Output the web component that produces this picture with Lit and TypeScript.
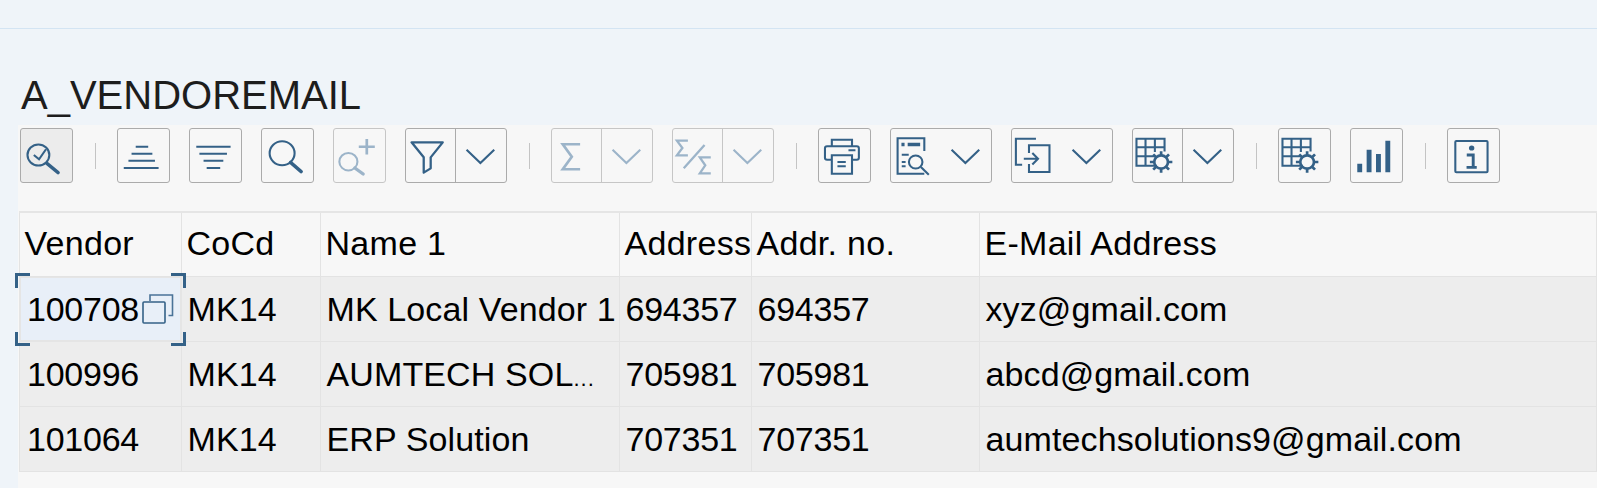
import { LitElement, html, css, svg, nothing } from "lit";
import { customElement } from "lit/decorators.js";

const chevron = (x: number, y = 21.7) => svg`<path d="M${x} ${y} L${x + 13.3} ${y + 13.3} L${x + 26.6} ${y}" fill="none" stroke-width="2"/>`;

const gridGear = svg`
  <path d="M24 37.7H4.3V10.7H31.3V23.5M4.3 19.3H31.3M4.3 28.3H22M13 10.7V37.7M22 10.7V24" fill="none" stroke-width="2"/>
  <circle cx="28" cy="34" r="6.6" fill="none" stroke-width="2.6"/>
  <path d="M28 23.2V27M28 41V44.8M17.2 34H21M35 34H38.8M20.4 26.4L23 29M33 39L35.6 41.6M35.6 26.4L33 29M23 39L20.4 41.6" fill="none" stroke-width="2.6"/>`;

const icons: Record<string, unknown> = {
  check: svg`<circle cx="17.7" cy="27" r="10.5" fill="none" stroke-width="2"/><path d="M26 35.5L36.5 44.5" stroke-width="3.6" stroke-linecap="round" fill="none"/><path d="M13.3 27L18.3 31.3L25 21.3" fill="none" stroke-width="2"/>`,
  asc: svg`<path d="M18 18.7H30M14 25.7H34M11 32.7H36.5M6.5 40H40" fill="none" stroke-width="2"/>`,
  desc: svg`<path d="M7 18.7H40M10 25.7H36.5M14 32.7H33M17 40H30" fill="none" stroke-width="2"/>`,
  find: svg`<circle cx="20.3" cy="25.3" r="12" fill="none" stroke-width="2"/><path d="M28.5 34.5L38.5 43.5" stroke-width="3.6" stroke-linecap="round" fill="none"/>`,
  findnext: svg`<circle cx="14.8" cy="33.7" r="8.7" fill="none" stroke-width="2"/><path d="M21 40L29 46" stroke-width="3.2" stroke-linecap="round" fill="none"/><path d="M32.5 11V26.4M24.8 18.7H40.2" fill="none" stroke-width="2.6"/>`,
  filter: svg`<path d="M6.3 14.3H36.3L24.7 29.3V40.3L18 44.7V29.3Z" fill="none" stroke-width="2.2" stroke-linejoin="round"/>`,
  sum: svg`<path d="M28 16.3H11.3L20 28.7L11.3 41.3H28" fill="none" stroke-width="2.6"/>`,
  subsum: svg`<path d="M15.3 12.7H4.7L10 20L4.7 27.3H15.3M31.3 17L11.3 40.3M37.3 29.3H26.7L32 37.3L26.7 45.3H37.3" fill="none" stroke-width="2.2"/>`,
  print: svg`<path d="M13.3 18.3V11.7H32.7V18.3M13.3 31.7H8.7A2 2 0 0 1 6.7 29.7V20.3A2 2 0 0 1 8.7 18.3H37.3A2 2 0 0 1 39.3 20.3V29.7A2 2 0 0 1 37.3 31.7H32.7M13.3 27.3H32.7V45.7H13.3ZM18.7 34H26.7M18.7 38.3H26.7M29.3 22.3H36" fill="none" stroke-width="2"/>`,
  view: svg`<path d="M33 23V10.3H7.3V45.7H33" fill="none" stroke-width="2"/><path d="M11 16.5H14M17 16.5H29" fill="none" stroke-width="3.4"/><path d="M11.3 26.7H18M11.3 34H15M11.3 38.3H15" fill="none" stroke-width="2"/><circle cx="24.7" cy="34" r="6.5" fill="none" stroke-width="2"/><path d="M29.7 39L37.3 46.7" fill="none" stroke-width="2"/>`,
  exportI: svg`<path d="M24 10.7H4.7V36.7H10.7M17.3 25V17.3H37V44H17.3V36M12.3 30.7H25.5M20.5 25L26 30.7L20.5 36.5" fill="none" stroke-width="2"/>`,
  settings: gridGear,
  chart: svg`<path d="M7 35.7H11.7V44.3H7ZM16 21.7H20.7V44.3H16ZM25 26H29.7V44.3H25ZM34 12.7H38.7V44.3H34Z" stroke="none"/>`,
  info: svg`<rect x="8" y="13" width="31" height="31.3" rx="1" fill="none" stroke-width="2"/><circle cx="23.7" cy="20" r="2.6" stroke="none"/><path d="M19 27H25.2V39M18.8 39.4H28.6" fill="none" stroke-width="2.8"/>`,
};

type Item =
  | { sep: true }
  | { icon: string; kind?: "plain" | "split" | "menu"; off?: boolean; on?: boolean };

const tools: Item[] = [
  { icon: "check", on: true },
  { sep: true },
  { icon: "asc" },
  { icon: "desc" },
  { icon: "find" },
  { icon: "findnext", off: true },
  { icon: "filter", kind: "split" },
  { sep: true },
  { icon: "sum", kind: "split", off: true },
  { icon: "subsum", kind: "split", off: true },
  { sep: true },
  { icon: "print" },
  { icon: "view", kind: "menu" },
  { icon: "exportI", kind: "menu" },
  { icon: "settings", kind: "split" },
  { sep: true },
  { icon: "settings" },
  { icon: "chart" },
  { sep: true },
  { icon: "info" },
];

const columns = ["Vendor", "CoCd", "Name 1", "Address", "Addr. no.", "E-Mail Address"];
const rows = [
  ["100708", "MK14", "MK Local Vendor 1", "694357", "694357", "xyz@gmail.com"],
  ["100996", "MK14", "AUMTECH SOL", "705981", "705981", "abcd@gmail.com"],
  ["101064", "MK14", "ERP Solution", "707351", "707351", "aumtechsolutions9@gmail.com"],
];

@customElement("app-root")
export class AppRoot extends LitElement {
  static styles = css`
    :host {
      display: block;
      width: 1597px;
      height: 488px;
      overflow: hidden;
      background: #eff4f9;
      font-family: "Liberation Sans", Arial, sans-serif;
      color: #000;
    }
    .top { height: 28px; border-bottom: 1px solid #d3e4f3; }
    .title {
      height: 96px;
      box-sizing: border-box;
      padding: 43px 0 0 21px;
      font-size: 40px;
      line-height: 46px;
      color: #1d1d1d;
      white-space: nowrap;
    }
    .main { margin-left: 18px; background: #f7f7f7; height: 363px; }
    .toolbar {
      height: 86px;
      box-sizing: border-box;
      padding: 3px 0 0 2.3px;
      display: flex;
      align-items: flex-start;
      gap: 18.9px;
    }
    .sep { flex: none; width: 1px; height: 26px; margin: 15px 2.5px 0; background: #c4c4c4; }
    .btn {
      position: relative;
      flex: none;
      width: 53.1px;
      height: 55px;
      box-sizing: border-box;
      border: 1px solid #ababab;
      border-radius: 3px;
      color: #346187;
    }
    .btn svg {
      position: absolute;
      left: -1px;
      top: -1px;
      width: 100%;
      height: 55px;
      stroke: currentColor;
      fill: currentColor;
      overflow: visible;
    }
    .btn.split, .btn.menu { width: 102.2px; }
    .btn.on { background: #ececec; }
    .btn.off { color: #9cb4c9; border-color: #c6c6c6; }
    .div { position: absolute; left: 49px; top: 0; bottom: 0; width: 1px; background: #ababab; }
    .off .div { background: #c6c6c6; }
    .table {
      display: grid;
      grid-template-columns: 163px 139px 299px 132px 228px 1fr;
      margin-left: 1px;
      border-top: 2px solid #e5e5e5;
      font-size: 34px;
      letter-spacing: 0.12px;
      white-space: nowrap;
    }
    .cell {
      position: relative;
      height: 65px;
      box-sizing: border-box;
      border-right: 1px solid #e3e3e3;
      border-bottom: 1px solid #e3e3e3;
      background: #ededed;
      line-height: 64px;
      padding-left: 5.5px;
      min-width: 0;
    }
    .cell.num { letter-spacing: -0.25px; }
    .cell.first { border-left: 1px solid #e3e3e3; padding-left: 7px; }
    .cell.head {
      height: 64px;
      background: #f7f7f7;
      line-height: 60px;
      padding-left: 4.5px;
      letter-spacing: 0.28px;
    }
    .cell.sel {
      z-index: 1;
      background: #e8eff8;
      border: 2px solid #e5e5e5;
      border-top-width: 1px;
      padding-left: 6px;
      line-height: 62px;
    }
    .dots { font-size: 22px; letter-spacing: 1px; }
    .corner { position: absolute; width: 12px; height: 11.5px; border: 0 solid #346187; }
    .tl { left: -6px; top: -5px; border-width: 3px 0 0 3px; }
    .tr { right: -6px; top: -5px; border-width: 3px 3px 0 0; }
    .bl { left: -6px; bottom: -6px; border-width: 0 0 3px 3px; }
    .br { right: -6px; bottom: -6px; border-width: 0 3px 3px 0; }
    .copy { position: absolute; left: 121.3px; top: 15.7px; width: 32px; height: 32px; overflow: visible; }
  `;

  private tool(t: Item) {
    if ("sep" in t) return html`<div class="sep"></div>`;
    const classes = ["btn", t.kind ?? "", t.on ? "on" : "", t.off ? "off" : ""].join(" ");
    return html`<div class=${classes}>
      ${t.kind === "split" ? html`<div class="div"></div>` : nothing}
      <svg><g transform="scale(1.04 1)">${icons[t.icon]}${t.kind ? chevron(59.2) : nothing}</g></svg>
    </div>`;
  }

  private cell(text: string, r: number, c: number) {
    const sel = r === 0 && c === 0;
    const cls = ["cell", c === 0 ? "first" : "", sel ? "sel" : "", /^\d+$/.test(text) ? "num" : ""].join(" ");
    return html`<div class=${cls}>
      ${text}${text === "AUMTECH SOL" ? html`<span class="dots">...</span>` : nothing}
      ${sel
        ? html`<span class="corner tl"></span><span class="corner tr"></span><span class="corner bl"></span><span class="corner br"></span>
            <svg class="copy" viewBox="0 0 32 32" fill="none" stroke="#346187" stroke-width="1.6">
              <rect x="1" y="8" width="22" height="21" rx="1"></rect>
              <path d="M8 7V1H30.5V21.500H26.500" stroke="#4a7398"></path>
            </svg>`
        : nothing}
    </div>`;
  }

  render() {
    return html`
      <div class="top"></div>
      <div class="title">A_VENDOREMAIL</div>
      <div class="main">
        <div class="toolbar">${tools.map((t) => this.tool(t))}</div>
        <div class="table">
          ${columns.map((c, i) => html`<div class="cell head ${i === 0 ? "first" : ""}">${c}</div>`)}
          ${rows.map((row, r) => row.map((t, c) => this.cell(t, r, c)))}
        </div>
      </div>
    `;
  }
}
